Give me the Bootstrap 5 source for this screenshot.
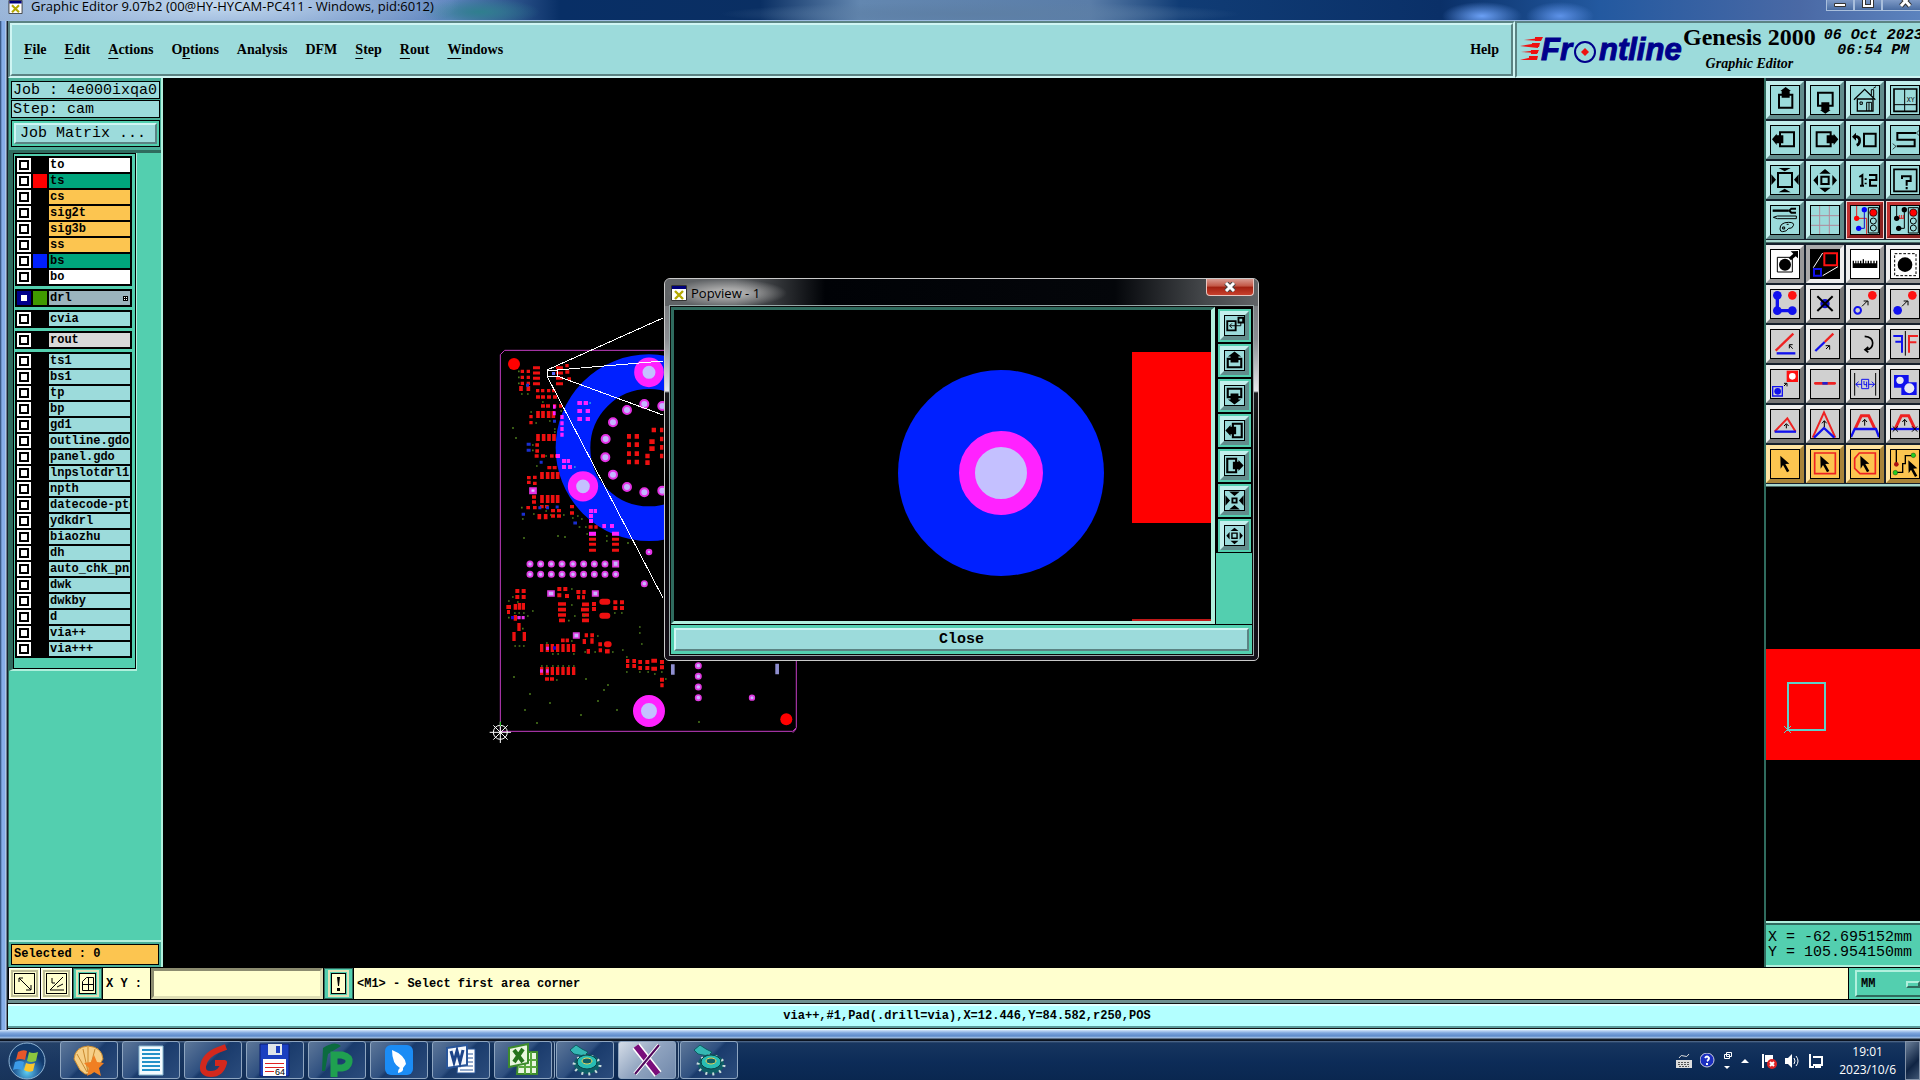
<!DOCTYPE html>
<html lang="en">
<head>
<meta charset="utf-8">
<meta name="viewport" content="width=device-width, initial-scale=1">
<title>Graphic Editor 9.07b2</title>
<link href="https://cdn.jsdelivr.net/npm/bootstrap@5.3.0/dist/css/bootstrap.min.css" rel="stylesheet">
<style>
:root{--aqua:#9cdbdb;--aqua-hi:#cff5f3;--aqua-lo:#5b8383;--teal:#53cfaf;--teal-hi:#b0f0dd;--teal-lo:#2f6b5e;--cream:#ffffcf;--amber:#fcc550}
body{background:#000;color:#000;font-family:"Liberation Mono",monospace;font-size:12px;line-height:14px;overflow:hidden}
svg{display:block;flex:none}
.aero-font{font-family:"Open Sans","Noto Sans",sans-serif;font-size:13px;line-height:16px}
.clock{font-size:12px;line-height:18px}
.serif-font{font-family:"Liberation Serif",serif;font-weight:700;font-size:14px;line-height:18px}
.mono-lg{font-size:15px;line-height:15px}
.mono-b{font-weight:700}
/* window frame */
.win-title{height:21px;padding-left:8px;background:radial-gradient(ellipse 240px 40px at 220px 4px,#c3d9ef,transparent),radial-gradient(ellipse 60px 14px at 480px 12px,#2f7f8e,transparent),radial-gradient(ellipse 260px 12px at 980px 14px,#5d7fa5,transparent),radial-gradient(ellipse 40px 14px at 1482px 16px,#6ba0f5,transparent),radial-gradient(ellipse 34px 14px at 1560px 16px,#5d92e8,transparent),linear-gradient(90deg,#98b4d8 0,#5f85bf 450px,#082f66 560px,#0a2f63 760px,#6387b0 860px,#5a7da8 1090px,#103c75 1180px,#0a3068 1440px,#2359a0 1600px,#4a69a5 1800px,#5c83be);border-bottom:1px solid #9bb9df}
.win-caption{line-height:13px}
.win-btn{height:11px;border:1px solid #a9bfdc;border-top:0;background:linear-gradient(#7d99c5,#4a6da2);padding:0}
.win-body{min-height:0;padding-left:8px;background:linear-gradient(90deg,#23406b 0,#86aee8 2px,#86aee8 5px,#cfdff5 6px,#16202c 7px)}
.win-foot{height:10px;background:linear-gradient(#cfe3fa 0,#7ea6de 3px,#5d8aca 6px,#a7c4e8 8px,#16202c 9px)}
.win-main{min-height:0}
/* header */
.gx-head{height:57px;background:var(--aqua-lo)}
.sunk-raised{border:2px solid var(--aqua-lo);border-bottom-color:var(--aqua-hi);border-right-color:var(--aqua-hi);background:var(--aqua)}
.sunk-raised>.inner{border:2px solid var(--aqua-hi);border-bottom-color:var(--aqua-lo);border-right-color:var(--aqua-lo)}
.menu-list{gap:18px;padding-left:12px}
.menu-list a,.help-link{color:#000;text-decoration:none}
.menu-list u{text-underline-offset:4px}
.brand{width:405px;border-right:0;border-bottom-color:var(--aqua-hi);padding-left:3px}
.brand-name{font-size:24px;line-height:28px}
.brand-date{font-size:15px;line-height:15px;font-style:italic;padding-top:5px}
/* sidebar */
.side{width:155px;background:var(--teal);border-right:2px solid var(--teal-hi);border-left:1px solid var(--teal-lo)}
.side-top{padding:3px 1px 3px 2px;background:#49ae98}
.job-box{background:var(--aqua);border:1px solid #000;height:18px;padding:1px 1px;margin-bottom:1px;white-space:nowrap}
.matrix-box{border:1px solid #000;padding:2px;height:27px;background:var(--teal);margin-top:2px}
.bevel-btn{border:2px solid var(--aqua-hi);border-right-color:var(--aqua-lo);border-bottom-color:var(--aqua-lo);background:var(--aqua);color:#000}
.side-mid{border-top:3px solid var(--teal-lo)}
.layer-rail{width:128px;border-left:4px solid var(--teal-lo);border-right:1px solid var(--teal-hi);border-bottom:2px solid var(--teal-hi)}
.layer-frame{border:1px solid #000;padding:2px 3px 10px 1px;background:var(--teal);gap:3px}
.layer-group{background:#000;padding:1px 2px}
.layer-line{height:16px;padding:1px 0;gap:2px}
.layer-line input{appearance:none;width:14px;height:14px;margin:0;background:#fff;border:2px solid #fff;box-shadow:inset 0 0 0 2px #000;flex:none}
.layer-line input:checked{border-color:#00008c;box-shadow:inset 0 0 0 2px #00008c}
.swatch{width:14px;height:14px;flex:none}
.s-red{background:#f00}.s-blue{background:#0020ff}.s-green{background:#409a00}
.layer-line label{flex:1;height:14px;padding-left:1px;background:var(--aqua);overflow:hidden;white-space:nowrap;font-weight:700}
.layer-line label.l-white{background:#fff}.layer-line label.l-green{background:#00a57c}.layer-line label.l-amber{background:var(--amber)}.layer-line label.l-slate{background:#9bb4bd}.layer-line label.l-grey{background:#d9d9d9}
.sel-wrap{padding:2px;border-top:2px solid var(--teal-hi);background:#49ae98}
.sel-box{height:21px;background:var(--amber);border:1px solid #000;padding:2px}
/* tools */
.tools{width:156px;border-left:2px solid var(--teal-lo);overflow:hidden}
.tool-set{padding-top:3px;padding-bottom:1px}
.tool-set-2{padding-top:2px;padding-bottom:1px}
.tool-row{gap:2px;margin-bottom:2px}
.tool-row:last-child{margin-bottom:0}
.tool{width:38px;height:38px;flex:none;padding:0;border:4px solid;border-color:#c2efec #628c8c #628c8c #c2efec;background:var(--aqua)}
.tool svg{width:30px;height:30px;outline:1px solid #000;outline-offset:-1px}
.t-red{border-color:#c03030 #8c2020 #8c2020 #c03030;outline:1px solid #f3d5d5;outline-offset:-1px;background:var(--aqua)}
.t-white{border-color:#eee #999 #999 #eee;background:#fff}
.t-on{border-color:#aaa #eee #eee #aaa}
.t-grey{border-color:#efefef #777 #777 #efefef;background:#d0d0d0}
.t-amber{border-color:#ffe3a0 #a8843a #a8843a #ffe3a0;background:var(--amber)}
.tool-sep{height:3px;border-top:2px solid #a9d9d0;background:#4c6a66}
.coords{height:46px;background:var(--teal);border-top:2px solid var(--teal-hi);border-bottom:2px solid var(--teal-hi);box-shadow:inset 0 2px 0 var(--teal-lo);padding:7px 0 0 2px;white-space:pre}
/* bottom bars */
.cmd{height:33px;background:#000;padding:1px 0 1px 1px;gap:1px}
.cmd-btn{width:31px;padding:2px;background:var(--cream);border:1px solid #fff;display:flex;align-items:center;justify-content:center}
.cmd-btn svg{border:1px solid #000;outline:2px solid #bdbd98;outline-offset:1px}
.c-teal{width:29px;background:var(--teal);border-color:var(--teal-lo)}
.c-teal svg{background:var(--cream);outline-color:#e2e2b8}
.xy-cell{background:var(--cream);width:47px;padding-left:3px}
.xy-input{width:172px;background:var(--cream);border:3px solid;border-color:#8c8c70 #dedeb4 #dedeb4 #8c8c70;outline:0;padding:0 4px;border-radius:0}
.msg{background:var(--cream);padding-left:3px}
.unit{width:71px;background:var(--teal);padding:2px 0 2px 6px;overflow:hidden}
.unit-box{width:80px;border:2px solid var(--teal-hi);border-bottom-color:var(--teal-lo);position:relative}
.unit-box select{appearance:none;border:0;background:transparent;width:100%;height:100%;padding:0 4px;font-weight:700;color:#000}
.unit-ind{position:absolute;left:49px;top:9px;width:14px;height:7px;border:2px solid var(--teal-hi);border-bottom-color:var(--teal-lo);border-right-color:var(--teal-lo);pointer-events:none}
.status{height:30px;border-top:3px solid #6f8f8f;background:#dff;padding:1px 0 2px}
.status-in{background:#b3ffff;border-top:2px solid #e3ffff;border-bottom:2px solid #5b9a9a;outline:1px solid #111;padding-left:6px}
/* taskbar */
.tbar{height:40px;background:linear-gradient(90deg,rgba(255,255,255,.06),transparent 30%),linear-gradient(#5b7291 0,#17355f 2px,#0d2c58 20px,#0a2750);border-top:1px solid #0b1320;color:#fff}
.orb{width:60px;border:0;background:transparent;padding:0 0 0 8px}
.task{width:58px;height:38px;padding:0;border:1px solid #8ea5c0;border-radius:3px;background:linear-gradient(135deg,#5d7799 0,#2f5080 45%,#1a3b6c 50%,#2b4c7c);display:flex;align-items:center;justify-content:center}
.task-on{background:linear-gradient(135deg,#d5dde8,#8fa3bf 50%,#7088ab)}
.task-stack{box-shadow:2px 0 0 #1a3358,3px 0 0 #8ea5c0}
.peek{width:15px;border:1px solid #8292a8;background:linear-gradient(135deg,#6b7f99,#0f2444 60%,#3f5674);padding:0}
.tray{gap:8px;padding-right:9px}
/* popup */
.pop{position:absolute;left:664px;top:278px;width:595px;border:1px solid #c9c9c9;border-radius:6px 6px 5px 5px;padding:0 5px 5px;background:linear-gradient(180deg,#6e7073 0,#8a8d92 60px,#e8eaee 112px,#17191c 114px,#000 200px,#15101a 380px)}
.pop-bar{height:27px;margin:0 -5px;border-radius:5px 5px 0 0;padding:0 4px 0 6px;background:radial-gradient(ellipse 60px 14px at 62px 14px,#a9a9a9 30%,transparent),linear-gradient(90deg,#606366 0,#606366 70px,#000206 160px,#04060a 450px,#45484b 540px,#606366)}
.pop-x{width:48px;height:17px;border:1px solid #e9c6c0;border-top:0;border-radius:0 0 4px 4px;background:linear-gradient(#d99a90,#c25544 45%,#a12010 50%,#c8402c);padding:0;display:flex;align-items:center;justify-content:center}
.pop-in{border:1px solid #0a0a0a;outline:1px solid #9aa;background:#000}
.pop-view{border:3px solid var(--teal-lo);border-right:4px solid var(--teal-hi);border-bottom-color:var(--teal-hi);height:317px;overflow:hidden}
.pop-tools{width:37px;background:linear-gradient(#000,#000) no-repeat 0 0/100% 246px,var(--teal);gap:2px;padding:2px 1px 0 2px;border-left:1px solid #000}
.pop-tool{width:33px;height:33px;padding:0;border:2px solid var(--teal);background:var(--teal)}
.pop-tool span{display:block;border:4px solid;border-color:#c2efec #628c8c #628c8c #c2efec;background:var(--aqua)}
.pop-tool svg{width:21px;height:21px;outline:1px solid #000;outline-offset:-1px}
.pop-foot{background:var(--teal);padding:3px;margin-top:1px}
.pop-close{height:23px;padding:0}
</style>
<script src="https://cdn.jsdelivr.net/npm/bootstrap@5.3.0/dist/js/bootstrap.bundle.min.js"></script>
</head>
<body class="d-flex flex-column min-vh-100 vh-100 position-relative">
<svg width="0" height="0" class="position-absolute">
<defs>
<symbol id="g-x" viewBox="0 0 16 16"><path fill="#fff" stroke="#333" d="M.5.5h15v15H.5z"/><path fill="#00007c" d="M1 1h14v3H1z"/><path stroke="#b4a800" stroke-width="2.4" d="M4 6l8 8M12 6l-8 8"/></symbol>
<symbol id="g-up" viewBox="0 0 90 90"><path fill="none" stroke="#000" stroke-width="6" d="M27 29h40v39H27z"/><path d="M47 6l16 12h-4v20H35V18h-4z"/></symbol>
<symbol id="g-dn" viewBox="0 0 90 90"><path fill="none" stroke="#000" stroke-width="6" d="M24 23h44v39H24z"/><path d="M46 86L30 75h4V52h24v23h4z"/></symbol>
<symbol id="g-lt" viewBox="0 0 90 90"><path fill="none" stroke="#000" stroke-width="6" d="M30 22h42v42H30z"/><path d="M6 43l14-17v5h20v24H20v5z"/></symbol>
<symbol id="g-rt" viewBox="0 0 90 90"><path fill="none" stroke="#000" stroke-width="6" d="M20 22h42v42H20z"/><path d="M85 43L71 26v5H50v24h21v5z"/></symbol>
<symbol id="p-up" viewBox="0 0 90 90"><path fill="none" stroke="#000" stroke-width="9" d="M16 38h58v36H16z"/><path d="M45 6l28 22H62v26H28V28H17z"/></symbol>
<symbol id="p-dn" viewBox="0 0 90 90"><path fill="none" stroke="#000" stroke-width="9" d="M16 16h58v36H16z"/><path d="M45 84L17 62h11V36h34v26h11z"/></symbol>
<symbol id="p-lt" viewBox="0 0 90 90"><path fill="none" stroke="#000" stroke-width="9" d="M38 16h38v58H38z"/><path d="M6 45l22-24v8h24v32H28v8z"/></symbol>
<symbol id="p-rt" viewBox="0 0 90 90"><path fill="none" stroke="#000" stroke-width="9" d="M14 16h38v58H14z"/><path d="M84 45L62 21v8H38v32h24v8z"/></symbol>
<symbol id="g-out" viewBox="0 0 90 90"><path fill="none" stroke="#000" stroke-width="6" d="M24 24h42v42H24z"/><path d="M26 9h36L44 19zM26 82h36L44 71zM4 28v32l14-16zM86 28v32L72 44z"/></symbol>
<symbol id="g-in" viewBox="0 0 90 90"><path fill="none" stroke="#000" stroke-width="6" d="M34 35h22v22H34z"/><path d="M45 12l17 14H28zM45 82l17-14H28zM10 46l14-16v32zM81 46L67 30v32z"/></symbol>
<symbol id="g-all" viewBox="0 0 90 90"><path fill="none" stroke="#000" stroke-width="8" d="M36 36h18v18H36z"/><path d="M22 6h46L45 26zM22 84h46L45 64zM6 22v46l20-23zM84 22v46L64 45z"/></symbol>
<symbol id="g-cur" viewBox="0 0 90 90"><path d="M31 20l27 24-12 1 12 21-7 4-12-22-7 11z"/></symbol>
<symbol id="g-light" viewBox="0 0 90 90"><path fill="none" stroke="#000" stroke-width="3" d="M55 8h30v76H55z"/><circle cx="70" cy="23" r="11" fill="red" stroke="#000" stroke-width="2"/><g fill="none" stroke="#000" stroke-width="3"><circle cx="70" cy="48" r="9"/><circle cx="70" cy="69" r="9"/></g></symbol>
<symbol id="g-cam" viewBox="0 0 36 36"><path fill="#35b8b4" stroke="#0e5b62" d="M3 8l6-5 6 4 6 3-4 4-10-2z"/><ellipse cx="20" cy="22" rx="13" ry="10" fill="#0e5f66"/><ellipse cx="20" cy="23" rx="13" ry="9" fill="none" stroke="#c9dcdc" stroke-dasharray="2 5" stroke-width="3"/><ellipse cx="20" cy="20" rx="10" ry="7" fill="#28bdb4" stroke="#093f44"/><ellipse cx="20" cy="19" rx="5" ry="3" fill="#0e5f66" stroke="#e9d65a"/></symbol>
</defs>
</svg>

<header class="win-title d-flex align-items-start justify-content-between">
  <div class="d-flex align-items-start"><svg width="15" height="14"><use href="#g-x" width="15" height="14"/></svg><span class="win-caption aero-font ms-1 ps-1">Graphic Editor 9.07b2 (00@HY-HYCAM-PC411 - Windows, pid:6012)</span></div>
  <div class="d-flex">
    <button class="win-btn" aria-label="Minimize"><svg width="26" height="10"><path fill="#fff" stroke="#333" d="M7.500 3.500h11v3h-11z"/></svg></button>
    <button class="win-btn" aria-label="Maximize"><svg width="26" height="10"><path fill="none" stroke="#333" stroke-width="4" d="M9-3h8v9H9z"/><path fill="none" stroke="#fff" stroke-width="2" d="M9-3h8v9H9z"/></svg></button>
    <button class="win-btn border-end-0" aria-label="Close window"><svg width="37" height="10"><path stroke="#333" stroke-width="5" d="M18-4l9 10M27-4l-9 10"/><path stroke="#fff" stroke-width="3" d="M18-4l9 10M27-4l-9 10"/></svg></button>
  </div>
</header>

<div class="win-body flex-grow-1 d-flex flex-column">
<div class="gx-head d-flex">
  <nav class="sunk-raised flex-grow-1 d-flex"><div class="inner serif-font flex-grow-1 d-flex align-items-center justify-content-between pe-2">
    <div class="menu-list d-flex">
      <a href="#"><u>F</u>ile</a><a href="#"><u>E</u>dit</a><a href="#"><u>A</u>ctions</a><a href="#">O<u>p</u>tions</a><a href="#">Analysis</a><a href="#">DFM</a><a href="#"><u>S</u>tep</a><a href="#"><u>R</u>out</a><a href="#"><u>W</u>indows</a>
    </div>
    <a class="help-link me-1" href="#">Help</a>
  </div></nav>
  <div class="sunk-raised brand d-flex overflow-hidden">
    <svg width="163" height="50" role="img" aria-label="Frontline"><g fill="#e11"><path d="M4 17l16-2v3zM0 23l18-3v5zM1 29l17-2v3zM0 37l17-4v4z"/><path d="M15 14h8l-2 4h-6zM12 20h8l-1 4h-7zM11 27h8l-2 4h-6zM9 33h9l-1 4H9z"/></g>
    <g font-family="Liberation Sans" font-weight="700" font-style="italic" font-size="31" fill="#00008b" stroke="#00008b"><text x="21" y="37">Fr</text><text x="79" y="37">ntline</text></g><circle cx="65" cy="29" r="10" fill="#9cdbdb" stroke="#00008b" stroke-width="2"/><path fill="#e11" d="M65 25l4 4-4 4-4-4z"/></svg>
    <div class="serif-font text-center text-nowrap"><div class="brand-name">Genesis 2000</div><div class="fst-italic pt-1">Graphic Editor</div></div>
    <div class="brand-date text-nowrap text-center ms-1 ps-1 mono-b">06 Oct 2023<br>06:54 PM</div>
  </div>
</div>

<main class="win-main d-flex flex-grow-1">
  <aside class="side d-flex flex-column">
    <div class="side-top mono-lg">
      <div class="job-box">Job : 4e000ixqa0</div><div class="job-box">Step: cam</div>
      <div class="matrix-box"><button class="bevel-btn w-100 h-100 text-start p-0 ps-1">Job Matrix ...</button></div>
    </div>
    <div class="side-mid flex-grow-1">
      <div class="layer-rail"><div class="layer-frame d-flex flex-column">
        <div class="layer-group">
          <div class="layer-line d-flex"><input type="checkbox" id="l1"><span class="swatch"></span><label class="l-white" for="l1">to</label></div>
          <div class="layer-line d-flex"><input type="checkbox" id="l2"><span class="swatch s-red"></span><label class="l-green" for="l2">ts</label></div>
          <div class="layer-line d-flex"><input type="checkbox" id="l3"><span class="swatch"></span><label class="l-amber" for="l3">cs</label></div>
          <div class="layer-line d-flex"><input type="checkbox" id="l4"><span class="swatch"></span><label class="l-amber" for="l4">sig2t</label></div>
          <div class="layer-line d-flex"><input type="checkbox" id="l5"><span class="swatch"></span><label class="l-amber" for="l5">sig3b</label></div>
          <div class="layer-line d-flex"><input type="checkbox" id="l6"><span class="swatch"></span><label class="l-amber" for="l6">ss</label></div>
          <div class="layer-line d-flex"><input type="checkbox" id="l7"><span class="swatch s-blue"></span><label class="l-green" for="l7">bs</label></div>
          <div class="layer-line d-flex"><input type="checkbox" id="l8"><span class="swatch"></span><label class="l-white" for="l8">bo</label></div>
        </div>
        <div class="layer-group"><div class="layer-line d-flex"><input type="checkbox" id="l9" checked><span class="swatch s-green"></span><label class="l-slate d-flex justify-content-between align-items-center" for="l9">drl<svg width="7" height="5"><path d="M0 0h5v5H0z"/><path fill="#fff" d="M1 1h1v1H1zM3 1h1v1H3zM1 3h1v1H1zM3 3h1v1H3z"/></svg></label></div></div>
        <div class="layer-group"><div class="layer-line d-flex"><input type="checkbox" id="l10"><span class="swatch"></span><label for="l10">cvia</label></div></div>
        <div class="layer-group"><div class="layer-line d-flex"><input type="checkbox" id="l11"><span class="swatch"></span><label class="l-grey" for="l11">rout</label></div></div>
        <div class="layer-group">
          <div class="layer-line d-flex"><input type="checkbox" id="m1"><span class="swatch"></span><label for="m1">ts1</label></div>
          <div class="layer-line d-flex"><input type="checkbox" id="m2"><span class="swatch"></span><label for="m2">bs1</label></div>
          <div class="layer-line d-flex"><input type="checkbox" id="m3"><span class="swatch"></span><label for="m3">tp</label></div>
          <div class="layer-line d-flex"><input type="checkbox" id="m4"><span class="swatch"></span><label for="m4">bp</label></div>
          <div class="layer-line d-flex"><input type="checkbox" id="m5"><span class="swatch"></span><label for="m5">gd1</label></div>
          <div class="layer-line d-flex"><input type="checkbox" id="m6"><span class="swatch"></span><label for="m6">outline.gdo</label></div>
          <div class="layer-line d-flex"><input type="checkbox" id="m7"><span class="swatch"></span><label for="m7">panel.gdo</label></div>
          <div class="layer-line d-flex"><input type="checkbox" id="m8"><span class="swatch"></span><label for="m8">lnpslotdrl1</label></div>
          <div class="layer-line d-flex"><input type="checkbox" id="m9"><span class="swatch"></span><label for="m9">npth</label></div>
          <div class="layer-line d-flex"><input type="checkbox" id="m10"><span class="swatch"></span><label for="m10">datecode-pte</label></div>
          <div class="layer-line d-flex"><input type="checkbox" id="m11"><span class="swatch"></span><label for="m11">ydkdrl</label></div>
          <div class="layer-line d-flex"><input type="checkbox" id="m12"><span class="swatch"></span><label for="m12">biaozhu</label></div>
          <div class="layer-line d-flex"><input type="checkbox" id="m13"><span class="swatch"></span><label for="m13">dh</label></div>
          <div class="layer-line d-flex"><input type="checkbox" id="m14"><span class="swatch"></span><label for="m14">auto_chk_pnl</label></div>
          <div class="layer-line d-flex"><input type="checkbox" id="m15"><span class="swatch"></span><label for="m15">dwk</label></div>
          <div class="layer-line d-flex"><input type="checkbox" id="m16"><span class="swatch"></span><label for="m16">dwkby</label></div>
          <div class="layer-line d-flex"><input type="checkbox" id="m17"><span class="swatch"></span><label for="m17">d</label></div>
          <div class="layer-line d-flex"><input type="checkbox" id="m18"><span class="swatch"></span><label for="m18">via++</label></div>
          <div class="layer-line d-flex"><input type="checkbox" id="m19"><span class="swatch"></span><label for="m19">via+++</label></div>
        </div>
      </div></div>
    </div>
    <div class="sel-wrap"><div class="sel-box mono-b">Selected : 0</div></div>
  </aside>

  <section class="flex-grow-1 position-relative overflow-hidden bg-black">
    <svg class="position-absolute" width="100%" height="100%"><g transform="translate(-163 -78)">
      <!-- upper half of the board, drawn at three units per pixel -->
      <g transform="translate(490 340) scale(.3333)" fill="none">
        <circle cx="477" cy="323" r="228" stroke="#0020ff" stroke-width="104"/>
        <path stroke="#c63ec6" stroke-width="3" d="M31 1175V44L44 31H900"/>
        <circle cx="72" cy="72" r="18" fill="red"/>
        <g stroke="#ee1010">
          <path stroke-width="9" d="M129 83h21M129 99h21M129 115h21M129 131h21M198 83h21M198 99h21M198 115h21M198 131h21M297 583h21M297 598h21M297 613h21M297 631h21M366 598h21M366 613h21M366 631h21"/>
          <path stroke-width="11" d="M144 213v21M159 213v21M176 213v21M190 213v21M144 282v21M161 282v21M177 282v21M192 282v21M156 396v21M173 396v21M188 396v21M203 396v21M156 465v24M173 465v24M188 465v24M203 465v24M93 138v15M115 138v15M148 522v16M167 522v16"/>
          <path stroke-width="10" d="M92 94h10M110 94h10M92 112h10M110 112h10M92 130h10M110 130h10M226 77h10M226 96h12M232 117h11M138 152h10M153 152h10M171 152h10M186 152h10M138 171h12M153 171h12M171 171h12M189 171h12M153 198h12M168 198h12M189 198h10M207 198h10M118 230h10M118 248h10M136 315h11M136 333h11M134 348h12M153 348h12M180 348h11M195 348h11M172 383h12M188 383h12M111 413h11M129 412h11M111 427h11M129 430h11M126 471h12M126 486h12M109 503h11M129 503h11M150 500h11M165 500h11M183 512h12M201 512h12M183 528h12M201 528h12M240 500h12M240 519h12M296 561h12M313 561h10"/>
          <path stroke-width="14" d="M411 289h12M434 289h13M411 314h12M434 314h13M411 341h12M434 341h13M411 366h12M434 366h13M485 270h13M478 305h16M478 326h16M466 348h13M466 368h13M510 270h10M510 297h10M510 322h10M510 348h10"/>
        </g>
        <path stroke="#f2f" stroke-width="12" d="M262 189h14M281 189h13M262 213h14M287 213h13M262 237h14M287 237h13M216 363h12M230 363h10M216 381h12M234 381h12M211 231h10M211 250h10M211 267h10M211 284h10M189 200h8M189 220h8M198 348h12M297 513h12M311 513h10M297 528h12M297 543h12M337 558h11M360 558h12M297 581h21M366 581h21"/>
        <path stroke="#1a2fd0" stroke-width="9" d="M108 136h9M110 313h12M110 331h12M149 367h9M189 244h9M145 503h9M168 503h9M197 501h9M95 523h10M250 549h11"/>
        <path stroke="#4b7a1c" stroke-width="5" d="M66 264h6M75 294h6M84 94h5M84 112h5M84 130h5M93 162h5M111 162h5M156 186h5M121 216h5M136 249h5M177 243h5M192 267h5M192 276h5M211 213h5M126 315h5M126 331h5M166 348h5M138 378h5M93 503h5M96 537h5M166 513h5M129 522h5M180 525h5M219 525h5M246 534h5M261 528h5M273 537h5M266 561h5M285 561h5M289 582h5M348 588h5M348 603h5M411 609h6M99 594h6M201 588h6M222 591h6"/>
        <path stroke="#29b0e0" stroke-width="5" d="M298 189h5M252 381h5"/>
        <g fill="#c4b5ff" stroke="#e531e5" stroke-width="6"><circle cx="463" cy="192" r="12"/><circle cx="411" cy="210" r="12"/><circle cx="369" cy="247" r="12"/><circle cx="347" cy="297" r="12"/><circle cx="346" cy="352" r="12"/><circle cx="369" cy="404" r="12"/><circle cx="411" cy="441" r="12"/><circle cx="463" cy="457" r="12"/><circle cx="517" cy="198" r="12"/><circle cx="517" cy="452" r="12"/><circle cx="477" cy="636" r="7"/></g>
        <g fill="#c4c0ff" stroke="#f2f" stroke-width="25"><circle cx="477" cy="97" r="32"/><circle cx="279" cy="439" r="33"/></g>
        <path fill="#d8c8ff" stroke="#e531e5" stroke-width="7" d="M121 445h16v14h-16z"/>
      </g>
      <!-- lower half of the board -->
      <g transform="translate(490 540) scale(.3333)" fill="none">
        <path stroke="#c63ec6" stroke-width="3" d="M31 574H908L919 563V300M909 578l10-12"/>
        <g fill="#c9b5ff" stroke="#e03ae0" stroke-width="5"><circle cx="120" cy="72" r="8"/><circle cx="152" cy="72" r="8"/><circle cx="184" cy="72" r="8"/><circle cx="216" cy="72" r="8"/><circle cx="249" cy="72" r="8"/><circle cx="281" cy="72" r="8"/><circle cx="313" cy="72" r="8"/><circle cx="345" cy="72" r="8"/><path d="M369 63h16v17h-16zM174 153h18v15h-18zM308 153h16v15h-16zM251 279h16v15h-16z"/><circle cx="120" cy="103" r="8"/><circle cx="152" cy="103" r="8"/><circle cx="184" cy="103" r="8"/><circle cx="216" cy="103" r="8"/><circle cx="249" cy="103" r="8"/><circle cx="281" cy="103" r="8"/><circle cx="313" cy="103" r="8"/><circle cx="345" cy="103" r="8"/><circle cx="377" cy="103" r="8"/><circle cx="463" cy="131" r="8"/><circle cx="625" cy="377" r="8"/><circle cx="625" cy="409" r="8"/><circle cx="625" cy="441" r="8"/><circle cx="625" cy="473" r="8"/><circle cx="786" cy="473" r="7"/></g>
        <g stroke="#ee1010">
          <path stroke-width="11" d="M204 192h24M204 209h24M204 225h24M207 241h18M276 193h21M273 209h24M276 225h21M276 241h21M213 301h11M227 301h10M165 417h12M180 417h12"/>
          <path stroke-width="10" d="M155 312v24M172 312v24M187 312v24M203 312v24M219 312v24M235 312v24M251 312v24M155 381v24M172 381v24M187 381v24M203 381v24M219 381v24M235 381v24M251 381v24M76 192v17M88 189v20M100 189v20M72 276v27M103 276v27M87 249v24M76 225v17M283 297v15M306 295v16M295 327v14"/>
          <path stroke-width="12" d="M76 153h12M95 153h12M76 171h12M95 171h12M49 201h14M51 216h9M202 147h12M220 147h12M202 166h12M225 168h12M259 156h12M277 156h10M261 172h9M276 172h9M306 192h12M306 207h12M370 187h12M390 187h12M370 204h12M390 204h12M284 286h10M301 286h11M325 313h11M326 331h10M408 363h10M408 378h10M427 363h11M427 378h11M445 366h11M445 384h11M466 366h12M466 384h12M484 362h17M484 386h17M510 366h12M510 382h12M510 419h12M511 436h10"/>
          <path stroke-width="18" stroke-linecap="round" d="M337 185h15M337 227h15M351 313h5"/><path stroke-width="13" d="M345 334h14"/>
        </g>
        <path stroke="#e531e5" stroke-width="10" d="M82 233h10M95 233h9M168 325h9M150 393h9M168 393h8"/><path stroke="#20c" stroke-width="10" d="M63 233h9M189 324h9"/>
        <path stroke="#4b7a1c" stroke-width="5" d="M54 183h5M66 171h5M54 233h5M72 219h5M85 219h5M99 219h5M81 186h5M126 213h5M111 228h5M96 266h5M73 318h5M86 318h5M99 318h5M243 147h5M243 195h5M252 228h5M234 242h5M280 228h5M372 219h5M393 219h5M321 288h5M243 303h5M186 342h5M202 342h5M249 342h5M168 309h5M283 336h5M313 336h5M366 336h5M396 330h5M408 351h5M447 261h5M447 279h5M453 312h5M408 396h5M447 396h5M472 396h5M492 402h5M513 396h5M525 417h5M153 378h5M168 378h5M186 378h5M202 378h5M217 378h5M234 378h5M249 378h5M198 420h5M69 411h6M117 462h6M177 489h6M102 510h6M138 549h6M270 525h6M285 417h6M339 450h6M351 435h6M321 483h6M378 510h6M624 546h6"/>
        <circle cx="477" cy="513" r="36" fill="#c4c0ff" stroke="#f2f" stroke-width="24"/>
        <circle cx="889" cy="538" r="18" fill="red"/><path fill="#8f8fd0" d="M543 373h11v31h-11zM856 371h11v32h-11z"/>
        <path stroke="#fff" stroke-width="3" d="M31 545v64M-1 577h64M10 556l43 43M53 556l-43 43"/><circle cx="31" cy="577" r="21" stroke="#fff" stroke-width="3"/><path stroke="#0a0" stroke-width="3" d="M31 545v14"/>
      </g>
      <g fill="none" stroke="#fff" shape-rendering="crispEdges"><path d="M547.5 370.500h10v6h-10zM547 370L663 318M557 370L663 361M557 376L663 415M547 376L663 598"/></g><path fill="#5b6cff" d="M552 372h3v3h-3z"/>
    </g></svg>
  </section>

  <aside class="tools d-flex flex-column">
    <div class="tool-set">
      <div class="tool-row d-flex">
        <button class="tool" aria-label="Pan up"><svg><use href="#g-up"/></svg></button>
        <button class="tool" aria-label="Pan down"><svg><use href="#g-dn"/></svg></button>
        <button class="tool" aria-label="Home"><svg viewBox="0 0 90 90"><path fill="none" stroke="#000" stroke-width="4" d="M12 44l32-31 32 31M22 42h47v36H22z"/><path fill="none" stroke="#000" stroke-width="3" d="M64 30V14h7v22M70 10l8-5M50 78V52h15v26M57 52v26M30 51h7v7h-7z"/></svg></button>
        <button class="tool" aria-label="XY view"><svg viewBox="0 0 90 90"><path fill="none" stroke="#000" stroke-width="5" d="M12 12h68v67H12z"/><path stroke="#000" stroke-width="3" d="M44 12v67M12 59h68"/><text x="50" y="52" font-family="Liberation Mono" font-size="20">XY</text></svg></button>
      </div>
      <div class="tool-row d-flex">
        <button class="tool" aria-label="Pan left"><svg><use href="#g-lt"/></svg></button>
        <button class="tool" aria-label="Pan right"><svg><use href="#g-rt"/></svg></button>
        <button class="tool" aria-label="Previous view"><svg viewBox="0 0 90 90"><path fill="none" stroke="#000" stroke-width="6" d="M42 26h35v38H42z"/><path fill="none" stroke="#000" stroke-width="8" d="M12 35h9q8 2 8 12t-9 14"/><path d="M6 35l12-12v24z"/></svg></button>
        <button class="tool" aria-label="Serpentine"><svg viewBox="0 0 90 90"><path fill="none" stroke="#000" stroke-width="6" d="M78 24H22v20h52v20H20"/><path fill="none" stroke="#000" stroke-width="2" d="M89 15l-10 9 10 9M8 56l10 8-10 9"/></svg></button>
      </div>
      <div class="tool-row d-flex">
        <button class="tool" aria-label="Zoom in"><svg><use href="#g-out"/></svg></button>
        <button class="tool" aria-label="Zoom out"><svg><use href="#g-in"/></svg></button>
        <button class="tool" aria-label="Scale one to two"><svg viewBox="0 0 90 90"><path fill="none" stroke="#000" stroke-width="6" d="M28 36l9-6v32M30 62h12M47 40v5M47 53v5M57 30h22v15H60v17h21"/></svg></button>
        <button class="tool" aria-label="Query"><svg viewBox="0 0 90 90"><path fill="none" stroke="#000" stroke-width="5" d="M12 13h68v66H12z"/><path fill="none" stroke="#000" stroke-width="6" d="M36 42v-8h26v14H50v14M50 66v7"/></svg></button>
      </div>
      <div class="tool-row d-flex">
        <button class="tool" aria-label="Setup"><svg viewBox="0 0 90 90"><path stroke="#000" stroke-width="7" d="M8 17h48"/><path fill="none" stroke="#000" stroke-width="6" d="M78 11H64l-6 6 6 6h14"/><path fill="none" stroke="#000" stroke-width="3" d="M10 37l12-4h57v8H22zM30 72q0-20 26-20 18 0 14 10t-14 8q-6 10-18 10-8 0-8-8zM38 66h6v6h-6zM50 58h6"/></svg></button>
        <button class="tool" aria-label="Grid"><svg viewBox="0 0 90 90"><path stroke="#b08a9a" stroke-width="3" d="M29 2v86M58 2v86M2 32h86M2 61h86"/></svg></button>
        <button class="tool t-red" aria-label="Nets on"><svg viewBox="0 0 90 90"><g fill="none" stroke-width="3"><path stroke="#d22" d="M20 2v38M20 40h30v48"/><path stroke="#11c" d="M43 14v56H26"/></g><circle cx="43" cy="14" r="8" fill="#00f"/><circle cx="20" cy="40" r="8" fill="red"/><circle cx="26" cy="70" r="8" fill="#00f"/><use href="#g-light"/></svg></button>
        <button class="tool t-red" aria-label="Nets off"><svg viewBox="0 0 90 90"><g fill="none" stroke-width="3"><path stroke="#000" d="M20 2v38M43 14v56H26"/><path stroke="#d22" d="M22 40h20M28 30v10M34 30v10M40 30v10"/></g><circle cx="43" cy="14" r="8"/><circle cx="20" cy="40" r="8"/><circle cx="26" cy="70" r="8"/><use href="#g-light"/></svg></button>
      </div>
    </div>
    <div class="tool-sep"></div>
    <div class="tool-set-2">
      <div class="tool-row d-flex">
        <button class="tool t-white" aria-label="Select feature"><svg viewBox="0 0 90 90"><path fill="none" stroke="#000" stroke-width="3" d="M22 25h45v44H22z"/><circle cx="45" cy="47" r="18"/><path d="M84 6v22l-7-6-14 12-7-7 14-13-8-7z"/></svg></button>
        <button class="tool t-white t-on" aria-label="Popview"><svg viewBox="0 0 90 90"><path d="M2 2h86v86H2z"/><path fill="none" stroke="#f11" stroke-width="6" d="M43 13h38v36H43z"/><path fill="none" stroke="#11e" stroke-width="6" d="M12 60h21v20H12z"/><path stroke="#fff" stroke-width="3" d="M10 56L38 12M38 80L84 53"/></svg></button>
        <button class="tool t-white" aria-label="Measure"><svg viewBox="0 0 90 90"><path d="M8 35h4v8h4v-8h3v8h4v-8h3v8h4v-8h4v8h4v-12h4v12h4v-8h3v8h4v-8h4v8h4v-8h4v8h5v-8h4v8h4v-8h4v22H8z"/></svg></button>
        <button class="tool t-white" aria-label="Area select"><svg viewBox="0 0 90 90"><path fill="none" stroke="#000" stroke-width="3" stroke-dasharray="8 5" d="M14 14h64v66H14z"/><circle cx="45" cy="47" r="22"/></svg></button>
      </div>
      <div class="tool-row d-flex">
        <button class="tool t-grey" aria-label="Add"><svg viewBox="0 0 90 90"><path fill="none" stroke="#11e" stroke-width="10" d="M22 19v46h45"/><g fill="#11e"><circle cx="22" cy="19" r="13"/><circle cx="22" cy="65" r="13"/><circle cx="67" cy="65" r="13"/></g><circle cx="67" cy="19" r="13" fill="#f11"/></svg></button>
        <button class="tool t-grey" aria-label="Delete"><svg viewBox="0 0 90 90"><circle cx="45" cy="44" r="14" fill="#11c"/><path stroke="#000" stroke-width="6" d="M22 22l46 44M68 22L22 66"/></svg></button>
        <button class="tool t-grey" aria-label="Copy"><svg viewBox="0 0 90 90"><circle cx="67" cy="19" r="13" fill="#f11"/><circle cx="23" cy="64" r="10" fill="none" stroke="#11e" stroke-width="6"/><path fill="none" stroke="#000" stroke-width="3" d="M36 52l16-16M41 36h13v13"/></svg></button>
        <button class="tool t-grey" aria-label="Move"><svg viewBox="0 0 90 90"><circle cx="67" cy="19" r="13" fill="#f11"/><circle cx="23" cy="64" r="13" fill="#11e"/><path fill="none" stroke="#000" stroke-width="3" d="M36 52l16-16M41 36h13v13"/></svg></button>
      </div>
      <div class="tool-row d-flex">
        <button class="tool t-grey" aria-label="Rotate line"><svg viewBox="0 0 90 90"><path stroke="#e22" stroke-width="7" d="M17 65L70 14"/><path stroke="#11e" stroke-width="7" d="M20 73h56"/><path fill="none" stroke="#000" stroke-width="3" d="M68 59L58 48M58 58V47h10"/></svg></button>
        <button class="tool t-grey" aria-label="Extend line"><svg viewBox="0 0 90 90"><path stroke="#11e" stroke-width="7" d="M16 66l28-27"/><path stroke="#e22" stroke-width="7" d="M44 39l26-25"/><path fill="none" stroke="#000" stroke-width="3" d="M48 60l10-10M47 50h12v12"/></svg></button>
        <button class="tool t-grey" aria-label="Rotate"><svg viewBox="0 0 90 90"><path fill="none" stroke="#000" stroke-width="5" d="M44 22q24 2 24 20T50 62h-4M55 54l-10 8 10 8"/></svg></button>
        <button class="tool t-grey" aria-label="Mirror"><svg viewBox="0 0 90 90"><path stroke="#000" stroke-width="3" d="M46 6v74"/><path fill="none" stroke="#11e" stroke-width="6" d="M10 21h26v50M16 38h20"/><path fill="none" stroke="#e22" stroke-width="6" d="M84 21H57v50M57 40h22"/></svg></button>
      </div>
      <div class="tool-row d-flex">
        <button class="tool t-grey" aria-label="Change symbol"><svg viewBox="0 0 90 90"><path fill="#f11" d="M50 5h34v34H50z"/><circle cx="67" cy="22" r="10" fill="#fff"/><path fill="none" stroke="#11e" stroke-width="4" d="M8 53h29v28H8z"/><circle cx="23" cy="67" r="10" fill="#11e"/><path fill="none" stroke="#000" stroke-width="3" d="M42 51l8-8M42 43h9v9"/></svg></button>
        <button class="tool t-grey" aria-label="Join lines"><svg viewBox="0 0 90 90"><path stroke="#e22" stroke-width="8" stroke-linecap="round" d="M16 43h58"/><path stroke="#22c" stroke-width="8" d="M37 43h16"/></svg></button>
        <button class="tool t-grey" aria-label="Spacing"><svg viewBox="0 0 90 90"><path stroke="#000" stroke-width="3" d="M14 12v68M77 12v68"/><path fill="none" stroke="#11e" stroke-width="3" d="M35 31h21v28H35zM18 46h17M56 46h17M26 38l-9 8 9 8M65 38l9 8-9 8M42 36v11h9M50 38v17"/></svg></button>
        <button class="tool t-grey" aria-label="Symbols"><svg viewBox="0 0 90 90"><path fill="#11e" d="M12 18h44v22h24v38H34V56H12z"/><circle cx="30" cy="34" r="11" fill="#e8e8f4"/><circle cx="58" cy="58" r="15" fill="#e8e8f4"/></svg></button>
      </div>
      <div class="tool-row d-flex">
        <button class="tool t-grey" aria-label="Stretch"><svg viewBox="0 0 90 90"><path fill="none" stroke="#e22" stroke-width="6" d="M14 68l38-40 25 40"/><path stroke="#11e" stroke-width="7" d="M14 68h64"/><path fill="none" stroke="#000" stroke-width="3" d="M49 58V46M42 51l7-7 7 7"/></svg></button>
        <button class="tool t-grey" aria-label="Stretch corner"><svg viewBox="0 0 90 90"><path fill="none" stroke="#e22" stroke-width="6" d="M8 86l34-76 34 76"/><path fill="none" stroke="#11e" stroke-width="7" d="M12 86l30-29 31 29"/><path fill="none" stroke="#000" stroke-width="3" d="M43 54V36M36 43l7-8 7 8"/></svg></button>
        <button class="tool t-grey" aria-label="Stretch parallel"><svg viewBox="0 0 90 90"><path fill="none" stroke="#e22" stroke-width="9" d="M16 58l18-38h22l18 38"/><path fill="none" stroke="#11e" stroke-width="7" d="M3 84l11-24h64l9 24"/><path fill="none" stroke="#000" stroke-width="3" d="M44 50V32M37 39l7-8 7 8"/></svg></button>
        <button class="tool t-grey" aria-label="Stretch trimmed"><svg viewBox="0 0 90 90"><path fill="none" stroke="#e22" stroke-width="9" d="M16 58l18-38h22l18 38"/><path stroke="#11e" stroke-width="7" d="M3 60h85"/><path fill="none" stroke="#000" stroke-width="3" d="M44 50V32M37 39l7-8 7 8M8 52l16 16M24 52L8 68M66 52l16 16M82 52L66 68"/></svg></button>
      </div>
      <div class="tool-row d-flex">
        <button class="tool t-amber" aria-label="Pick"><svg><use href="#g-cur"/></svg></button>
        <button class="tool t-amber" aria-label="Pick in box"><svg viewBox="0 0 90 90"><path fill="none" stroke="#e22" stroke-width="5" d="M14 12h62v62H14z"/><use href="#g-cur"/></svg></button>
        <button class="tool t-amber" aria-label="Pick in polygon"><svg viewBox="0 0 90 90"><path fill="none" stroke="#e22" stroke-width="5" d="M28 12h48v62H30L14 58V28z"/><use href="#g-cur"/></svg></button>
        <button class="tool t-amber" aria-label="Pick net"><svg viewBox="0 0 90 90"><path fill="none" stroke="#000" stroke-width="4" d="M19 2v44M16 70h22V44h8V20h18"/><circle cx="19" cy="46" r="7" fill="#a11"/><circle cx="16" cy="71" r="7" fill="#2c2" stroke="#000"/><circle cx="70" cy="19" r="7" fill="#2c2" stroke="#000"/><use href="#g-cur" x="24" y="14"/></svg></button>
      </div>
    </div>
    <div class="tool-sep"></div>
    <div class="flex-grow-1 d-flex align-items-center bg-black"><svg width="100%" height="111"><path fill="red" d="M0 0h200v111H0z"/><path fill="none" stroke="#5fd0c8" stroke-width="2" d="M22 34h37v47H22z"/><path stroke="#5fd0c8" d="M18 77l7 7M25 77l-7 7"/></svg></div>
    <div class="coords mono-lg">X = -62.695152mm
Y = 105.954150mm</div>
  </aside>
</main>

<div class="cmd d-flex">
  <button class="cmd-btn" aria-label="Snap vector"><svg width="21" height="21"><path fill="none" stroke="#000" d="M4 4l12 12M4 8V4h4M16 11v5h-5"/></svg></button>
  <button class="cmd-btn" aria-label="Snap angle"><svg width="21" height="21"><path fill="none" stroke="#000" d="M3 16L16 3M3 16h14M5 4v5h3M10 13l6-3"/></svg></button>
  <button class="cmd-btn c-teal" aria-label="Snap grid"><svg width="17" height="21"><path fill="none" stroke="#000" d="M6.500 3.500h7v13h-11v-9zM8.500 3v14M2 10.500h12"/></svg></button>
  <label class="xy-cell mono-b d-flex align-items-center" for="xy">X Y :</label>
  <input class="xy-input" id="xy" type="text">
  <button class="cmd-btn c-teal" aria-label="Alert"><svg width="15" height="21"><path d="M5 3h3l-1 9H6zM5 14h3v3H5z"/></svg></button>
  <div class="msg mono-b flex-grow-1 d-flex align-items-center">&lt;M1&gt; - Select first area corner</div>
  <div class="unit d-flex"><div class="unit-box flex-shrink-0"><select aria-label="Units"><option>MM</option><option>INCH</option></select><span class="unit-ind"></span></div></div>
</div>
<div class="status"><div class="status-in h-100 d-flex align-items-center justify-content-center mono-b">via++,#1,Pad(.drill=via),X=12.446,Y=84.582,r250,POS</div></div>
</div>
<div class="win-foot"></div>

<footer class="tbar d-flex justify-content-between">
  <div class="d-flex">
    <button class="orb" aria-label="Start"><svg width="40" height="40" viewBox="0 0 40 40"><defs><radialGradient id="og" cy=".8"><stop offset="0" stop-color="#5fd0f5"/><stop offset=".6" stop-color="#2a6aa5"/><stop offset="1" stop-color="#123a6c"/></radialGradient></defs><circle cx="19" cy="20" r="18" fill="url(#og)" stroke="#8fb4d4"/><path fill="#e8572a" d="M10 11q5-3 9-1l-2 9q-5-2-9 0z"/><path fill="#8cc63e" d="M21 11q4 2 9 0l-2 9q-5 2-9 0z"/><path fill="#3b9be8" d="M7 21q5-2 9 0l-2 8q-5-2-9 0z"/><path fill="#fbc52d" d="M18 22q4 2 9 0l-2 8q-5 2-9-1z"/></svg></button>
    <div class="d-flex gap-1">
      <button class="task" aria-label="Shell"><svg width="36" height="36"><path fill="#f6cf86" stroke="#c98a2f" d="M3 17Q4 5 17 4q14 1 15 13l-6 10-6 5h-6l-5-4z"/><path fill="none" stroke="#c98a2f" d="M16 30L6 12M17 30L12 7M17 30V5M18 30l6-23"/><path fill="#f07f22" d="M23 13l3 7 7 1-5 5 2 8-7-4-7 4 2-8-5-5 7-1z"/></svg></button>
      <button class="task" aria-label="Notes"><svg width="36" height="36"><path fill="#f4fbff" stroke="#88b7cf" d="M6 4h24v29H6z"/><path stroke="#2591c8" stroke-width="2" d="M9 8h18M9 12h18M9 16h18M9 20h18M9 24h18M9 28h18"/></svg></button>
      <button class="task" aria-label="G editor"><svg width="36" height="36"><path fill="none" stroke="#d3281d" stroke-width="6" stroke-linejoin="round" d="M31 5l-8 3q-13 5-15 16-1 8 8 8 10 0 13-11h-9"/></svg></button>
      <button class="task" aria-label="Disk"><svg width="36" height="36"><path fill="#1b3fc0" stroke="#0a1f70" d="M3 2h29v32H3z"/><path fill="#dfe5ea" d="M11 2h14v11H11z"/><path fill="#1b3fc0" d="M19 4h4v7h-4z"/><path fill="#fff" d="M6 17h23v17H6z"/><path stroke="#d22" d="M8 21.500h19M8 25.500h19M8 29.500h9"/><text x="18" y="33" font-family="Liberation Sans" font-size="9">64</text></svg></button>
      <button class="task" aria-label="P tool"><svg width="36" height="36"><path fill="#0b6b3f" d="M4 6Q16-2 22 4L9 12 6 29H3z"/><path fill="none" stroke="#1fa050" stroke-width="7" d="M15 35V13h8q8 2 7 7t-7 6h-8"/></svg></button>
      <button class="task" aria-label="Wing"><svg width="36" height="36"><rect x="4" y="3" width="28" height="30" rx="6" fill="#1b8cf5"/><path fill="#fff" d="M11 8q13 5 14 14l-3 4q1 4-5 5 0-4 2-5-8-4-8-18z"/></svg></button>
      <button class="task" aria-label="Word"><svg width="36" height="36"><path fill="#fff" stroke="#2a5699" d="M16 7h16v24H14z"/><path stroke="#2a5699" d="M24 12h6M24 16h6M24 20h6M17 24h13M17 28h13"/><path fill="#f5f8fd" stroke="#2a5699" stroke-width="2" d="M4 6l20-3v20L4 26z"/><path fill="none" stroke="#1d4488" stroke-width="3" d="M8 9l3 11 3-11 3 11 3-12"/></svg></button>
      <button class="task task-stack" aria-label="Excel"><svg width="36" height="36"><path fill="#e9f6df" stroke="#3d8b2c" stroke-width="2" d="M14 10h18v22H12z"/><path stroke="#5aa83e" stroke-width="2" d="M14 18h18M14 25h18M20 10v22M26 10v22"/><path fill="#e9f6df" stroke="#3d8b2c" stroke-width="2" d="M4 6l19-4v19L4 25z"/><path stroke="#26731c" stroke-width="4" d="M9 8l9 12M18 7L9 20"/></svg></button>
      <button class="task" aria-label="CAM"><svg width="36" height="36"><use href="#g-cam"/></svg></button>
      <button class="task task-on task-stack" aria-label="X server"><svg width="36" height="36"><path stroke="#fff" stroke-width="9" d="M7 4l22 28"/><path stroke="#7a0d7a" stroke-width="6" d="M7 4l22 28"/><path stroke="#fff" stroke-width="4" d="M30 3L6 32"/><path stroke="#50085c" stroke-width="2" d="M30 3L6 32"/></svg></button>
      <button class="task" aria-label="CAM 2"><svg width="36" height="36"><use href="#g-cam"/></svg></button>
    </div>
  </div>
  <div class="d-flex">
    <div class="tray d-flex align-items-center">
      <svg width="16" height="16"><path fill="#ddd" d="M0 7h16v8H0z"/><path stroke="#555" stroke-dasharray="2 1" d="M2 9.500h12M2 11.500h12M3 13.500h10"/><path fill="none" stroke="#ddd" d="M3 5q2-4 5-2t5-2"/></svg>
      <svg width="15" height="15"><circle cx="7" cy="7" r="7" fill="#1b2fc0" stroke="#ccd"/><path fill="none" stroke="#fff" stroke-width="2" d="M5 5q2-3 4 0 0 2-2 3M7 10v2"/></svg>
      <svg width="10" height="18"><path fill="none" stroke="#fff" d="M3.500.5h5v4h-5zM1.500 2.500h5v4h-5z"/><path fill="#fff" d="M1 14h6l-3 3z"/></svg>
      <svg class="me-1" width="8" height="5"><path fill="#fff" d="M0 5l4-4 4 4z"/></svg>
      <svg width="16" height="16"><path stroke="#fff" stroke-width="2" d="M2 1v14"/><path fill="#fff" d="M4 2h8v7H4z"/><circle cx="11" cy="11" r="5" fill="#d22"/><path stroke="#fff" stroke-width="2" d="M9 9l4 4M13 9l-4 4"/></svg>
      <svg width="15" height="14"><path fill="#fff" d="M0 4h3l4-4v14l-4-4H0z"/><path fill="none" stroke="#fff" d="M9 4q2 3 0 6M11 2q4 5 0 10"/></svg>
      <svg width="15" height="15"><path fill="none" stroke="#fff" stroke-width="2" d="M5 4h9v8H5M7 14h6M2 1v5M2 6v8h4"/></svg>
      <div class="aero-font clock text-center ms-2">19:01<br>2023/10/6</div>
    </div>
    <button class="peek" aria-label="Show desktop"></button>
  </div>
</footer>

<div class="pop">
  <div class="pop-bar d-flex justify-content-between align-items-start">
    <div class="d-flex align-items-center h-100 aero-font"><svg width="16" height="16"><use href="#g-x"/></svg><span class="ms-1">Popview - 1</span></div>
    <button class="pop-x" aria-label="Close Popview"><svg width="12" height="10"><path stroke="#444" stroke-width="5" d="M2 1l8 8M10 1L2 9"/><path stroke="#fff" stroke-width="3" d="M2 1l8 8M10 1L2 9"/></svg></button>
  </div>
  <div class="pop-in">
    <div class="d-flex">
      <div class="pop-view flex-grow-1"><svg width="100%" height="311"><circle cx="327" cy="163" r="103" fill="#0020ff"/><circle cx="327" cy="163" r="34" fill="#c4c0ff" stroke="#f2f" stroke-width="16"/><path fill="red" d="M458 42h90v171h-90z"/><path fill="#c01818" d="M458 309h90v2h-90z"/></svg></div>
      <div class="pop-tools d-flex flex-column">
        <button class="pop-tool" aria-label="Popup window"><span><svg viewBox="0 0 90 90"><path fill="none" stroke="#000" stroke-width="8" d="M14 26h36v40H14zM62 12h20v20H62z"/><path fill="none" stroke="#000" stroke-width="4" d="M72 32v14H24M34 36L24 46l10 10"/></svg></span></button>
        <button class="pop-tool" aria-label="Pan up"><span><svg><use href="#p-up"/></svg></span></button>
        <button class="pop-tool" aria-label="Pan down"><span><svg><use href="#p-dn"/></svg></span></button>
        <button class="pop-tool" aria-label="Pan left"><span><svg><use href="#p-lt"/></svg></span></button>
        <button class="pop-tool" aria-label="Pan right"><span><svg><use href="#p-rt"/></svg></span></button>
        <button class="pop-tool" aria-label="Zoom in"><span><svg><use href="#g-all"/></svg></span></button>
        <button class="pop-tool" aria-label="Zoom out"><span><svg><use href="#g-in"/></svg></span></button>
      </div>
    </div>
    <div class="pop-foot"><button class="bevel-btn pop-close w-100 mono-lg mono-b">Close</button></div>
  </div>
</div>
</body>
</html>
